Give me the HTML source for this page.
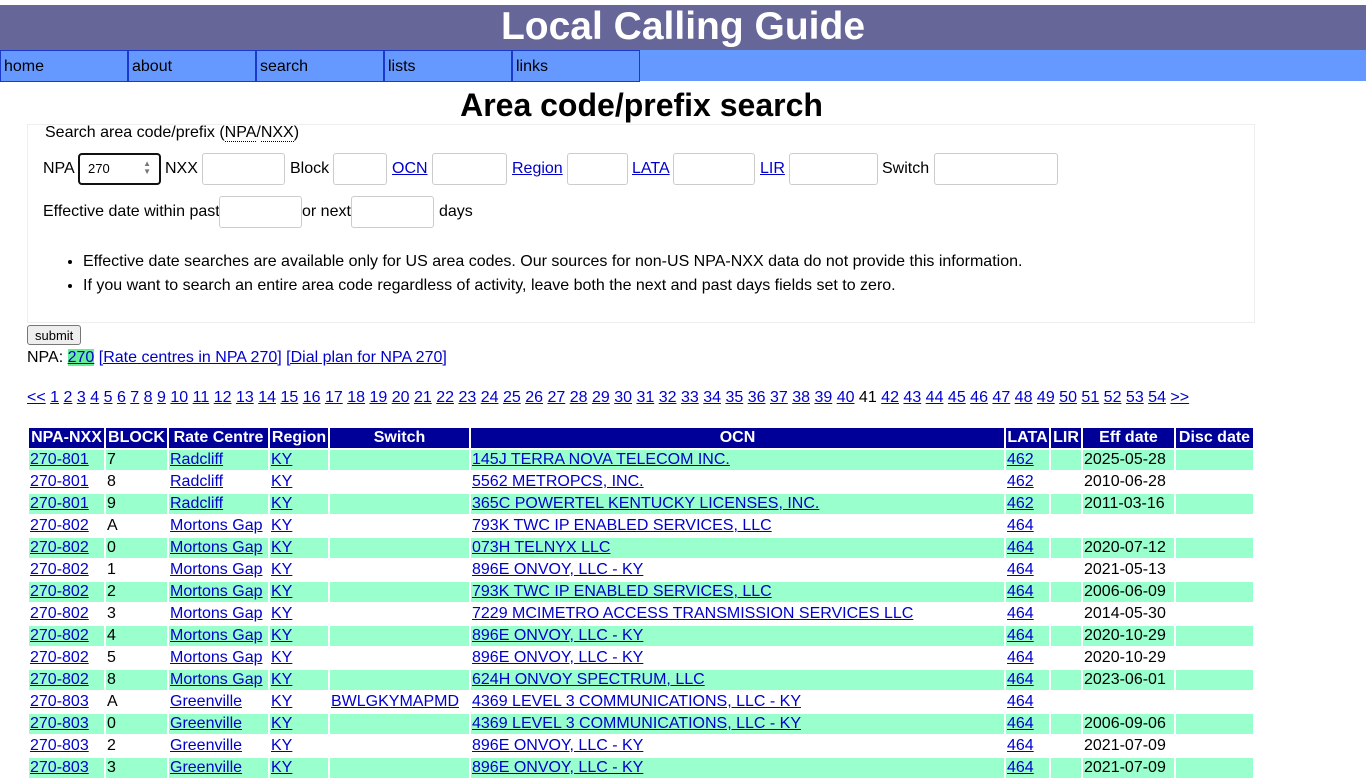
<!DOCTYPE html>
<html><head><meta charset="utf-8"><style>
body{margin:0;font-family:"Liberation Sans",Arial,sans-serif;font-size:16px;color:#000;background:#fff;overflow:hidden;height:768px}
a{color:#0000cc;text-decoration:underline}
.hdr{position:absolute;top:5px;left:0;width:1366px;height:45px;background:#666699;color:#fff;font-weight:bold;font-size:39px;text-align:center;line-height:44px}
.nav{position:absolute;top:50px;left:0;width:1366px;height:31px;background:#6699ff}
.nav div{position:absolute;top:0;border:1px solid #1a3acc;line-height:31px;padding-left:3px;box-sizing:border-box;width:128px;height:32px}
h1{position:absolute;top:88px;left:0;width:1283px;text-align:center;margin:0;font-size:32px;line-height:34px}
fieldset{position:absolute;left:27px;top:124px;width:1228px;height:199px;border:1px solid #eee;box-sizing:border-box;margin:0;padding:0}
legend{position:absolute;left:16px;top:-1px;padding:0 1px}
.abs{position:absolute}
.in{position:absolute;height:32px;border:1px solid #ccc;border-radius:3px;box-sizing:border-box}
ul{position:absolute;left:43px;top:250px;margin:0;padding-left:40px}
li{line-height:24px}
button{position:absolute;left:27px;top:325px;font:13px "Liberation Sans",sans-serif;height:20px;padding:0 7px;border:1px solid #777;border-radius:3px;background:#eee}
table{position:absolute;left:27px;top:426px;border-spacing:2px;border-collapse:separate}
th{background:#000099;color:#fff;font-weight:bold;height:20px;padding:0 1px;white-space:nowrap}
td{height:20px;padding:0 1px;white-space:nowrap}
tr.g td{background:#99ffcc}
</style></head><body>
<div class="hdr">Local Calling Guide</div>
<div class="nav"><div style="left:0">home</div><div style="left:128px">about</div><div style="left:256px">search</div><div style="left:384px">lists</div><div style="left:512px">links</div></div>
<h1>Area code/prefix search</h1>
<fieldset><legend>Search area code/prefix (<span style="border-bottom:1px dotted">NPA</span>/<span style="border-bottom:1px dotted">NXX</span>)</legend></fieldset>
<span class="abs" style="left:43px;top:160px">NPA</span>
<div class="in" style="left:78px;top:153px;width:83px;border:2px solid #111;border-radius:4px;font-size:13px;padding:6px 0 0 8px">270<span style="position:absolute;right:8px;top:5px;font-size:8px;color:#777;line-height:8px">▲<br>▼</span></div>
<span class="abs" style="left:165px;top:160px">NXX</span><div class="in" style="left:202px;top:153px;width:83px"></div>
<span class="abs" style="left:290px;top:160px">Block</span><div class="in" style="left:333px;top:153px;width:54px"></div>
<a class="abs" style="left:392px;top:160px">OCN</a><div class="in" style="left:432px;top:153px;width:75px"></div>
<a class="abs" style="left:512px;top:160px">Region</a><div class="in" style="left:567px;top:153px;width:61px"></div>
<a class="abs" style="left:632px;top:160px">LATA</a><div class="in" style="left:673px;top:153px;width:82px"></div>
<a class="abs" style="left:760px;top:160px">LIR</a><div class="in" style="left:789px;top:153px;width:89px"></div>
<span class="abs" style="left:882px;top:160px">Switch</span><div class="in" style="left:934px;top:153px;width:124px"></div>
<span class="abs" style="left:43px;top:203px">Effective date within past</span><div class="in" style="left:219px;top:196px;width:83px"></div>
<span class="abs" style="left:302px;top:203px">or next</span><div class="in" style="left:351px;top:196px;width:83px"></div>
<span class="abs" style="left:439px;top:203px">days</span>
<ul><li>Effective date searches are available only for US area codes. Our sources for non-US NPA-NXX data do not provide this information.</li><li>If you want to search an entire area code regardless of activity, leave both the next and past days fields set to zero.</li></ul>
<button>submit</button>
<div class="abs" style="left:27px;top:349px">NPA: <a style="background:#66ee99">270</a> <a>[Rate centres in NPA 270]</a> <a>[Dial plan for NPA 270]</a></div>
<div class="abs" style="left:27px;top:389px;white-space:nowrap"><a>&lt;&lt;</a> <a>1</a> <a>2</a> <a>3</a> <a>4</a> <a>5</a> <a>6</a> <a>7</a> <a>8</a> <a>9</a> <a>10</a> <a>11</a> <a>12</a> <a>13</a> <a>14</a> <a>15</a> <a>16</a> <a>17</a> <a>18</a> <a>19</a> <a>20</a> <a>21</a> <a>22</a> <a>23</a> <a>24</a> <a>25</a> <a>26</a> <a>27</a> <a>28</a> <a>29</a> <a>30</a> <a>31</a> <a>32</a> <a>33</a> <a>34</a> <a>35</a> <a>36</a> <a>37</a> <a>38</a> <a>39</a> <a>40</a> 41 <a>42</a> <a>43</a> <a>44</a> <a>45</a> <a>46</a> <a>47</a> <a>48</a> <a>49</a> <a>50</a> <a>51</a> <a>52</a> <a>53</a> <a>54</a> <a>&gt;&gt;</a></div>
<table>
<tr><th style="width:73px">NPA-NXX</th><th style="width:59px">BLOCK</th><th style="width:97px">Rate Centre</th><th style="width:56px">Region</th><th style="width:137px">Switch</th><th style="width:531px">OCN</th><th style="width:41px">LATA</th><th style="width:28px">LIR</th><th style="width:89px">Eff date</th><th style="width:75px">Disc date</th></tr>
<tr class="g"><td><a>270-801</a></td><td>7</td><td><a>Radcliff</a></td><td><a>KY</a></td><td></td><td><a>145J TERRA NOVA TELECOM INC.</a></td><td><a>462</a></td><td></td><td>2025-05-28</td><td></td></tr>
<tr><td><a>270-801</a></td><td>8</td><td><a>Radcliff</a></td><td><a>KY</a></td><td></td><td><a>5562 METROPCS, INC.</a></td><td><a>462</a></td><td></td><td>2010-06-28</td><td></td></tr>
<tr class="g"><td><a>270-801</a></td><td>9</td><td><a>Radcliff</a></td><td><a>KY</a></td><td></td><td><a>365C POWERTEL KENTUCKY LICENSES, INC.</a></td><td><a>462</a></td><td></td><td>2011-03-16</td><td></td></tr>
<tr><td><a>270-802</a></td><td>A</td><td><a>Mortons Gap</a></td><td><a>KY</a></td><td></td><td><a>793K TWC IP ENABLED SERVICES, LLC</a></td><td><a>464</a></td><td></td><td></td><td></td></tr>
<tr class="g"><td><a>270-802</a></td><td>0</td><td><a>Mortons Gap</a></td><td><a>KY</a></td><td></td><td><a>073H TELNYX LLC</a></td><td><a>464</a></td><td></td><td>2020-07-12</td><td></td></tr>
<tr><td><a>270-802</a></td><td>1</td><td><a>Mortons Gap</a></td><td><a>KY</a></td><td></td><td><a>896E ONVOY, LLC - KY</a></td><td><a>464</a></td><td></td><td>2021-05-13</td><td></td></tr>
<tr class="g"><td><a>270-802</a></td><td>2</td><td><a>Mortons Gap</a></td><td><a>KY</a></td><td></td><td><a>793K TWC IP ENABLED SERVICES, LLC</a></td><td><a>464</a></td><td></td><td>2006-06-09</td><td></td></tr>
<tr><td><a>270-802</a></td><td>3</td><td><a>Mortons Gap</a></td><td><a>KY</a></td><td></td><td><a>7229 MCIMETRO ACCESS TRANSMISSION SERVICES LLC</a></td><td><a>464</a></td><td></td><td>2014-05-30</td><td></td></tr>
<tr class="g"><td><a>270-802</a></td><td>4</td><td><a>Mortons Gap</a></td><td><a>KY</a></td><td></td><td><a>896E ONVOY, LLC - KY</a></td><td><a>464</a></td><td></td><td>2020-10-29</td><td></td></tr>
<tr><td><a>270-802</a></td><td>5</td><td><a>Mortons Gap</a></td><td><a>KY</a></td><td></td><td><a>896E ONVOY, LLC - KY</a></td><td><a>464</a></td><td></td><td>2020-10-29</td><td></td></tr>
<tr class="g"><td><a>270-802</a></td><td>8</td><td><a>Mortons Gap</a></td><td><a>KY</a></td><td></td><td><a>624H ONVOY SPECTRUM, LLC</a></td><td><a>464</a></td><td></td><td>2023-06-01</td><td></td></tr>
<tr><td><a>270-803</a></td><td>A</td><td><a>Greenville</a></td><td><a>KY</a></td><td><a>BWLGKYMAPMD</a></td><td><a>4369 LEVEL 3 COMMUNICATIONS, LLC - KY</a></td><td><a>464</a></td><td></td><td></td><td></td></tr>
<tr class="g"><td><a>270-803</a></td><td>0</td><td><a>Greenville</a></td><td><a>KY</a></td><td></td><td><a>4369 LEVEL 3 COMMUNICATIONS, LLC - KY</a></td><td><a>464</a></td><td></td><td>2006-09-06</td><td></td></tr>
<tr><td><a>270-803</a></td><td>2</td><td><a>Greenville</a></td><td><a>KY</a></td><td></td><td><a>896E ONVOY, LLC - KY</a></td><td><a>464</a></td><td></td><td>2021-07-09</td><td></td></tr>
<tr class="g"><td><a>270-803</a></td><td>3</td><td><a>Greenville</a></td><td><a>KY</a></td><td></td><td><a>896E ONVOY, LLC - KY</a></td><td><a>464</a></td><td></td><td>2021-07-09</td><td></td></tr>
</table>
</body></html>
